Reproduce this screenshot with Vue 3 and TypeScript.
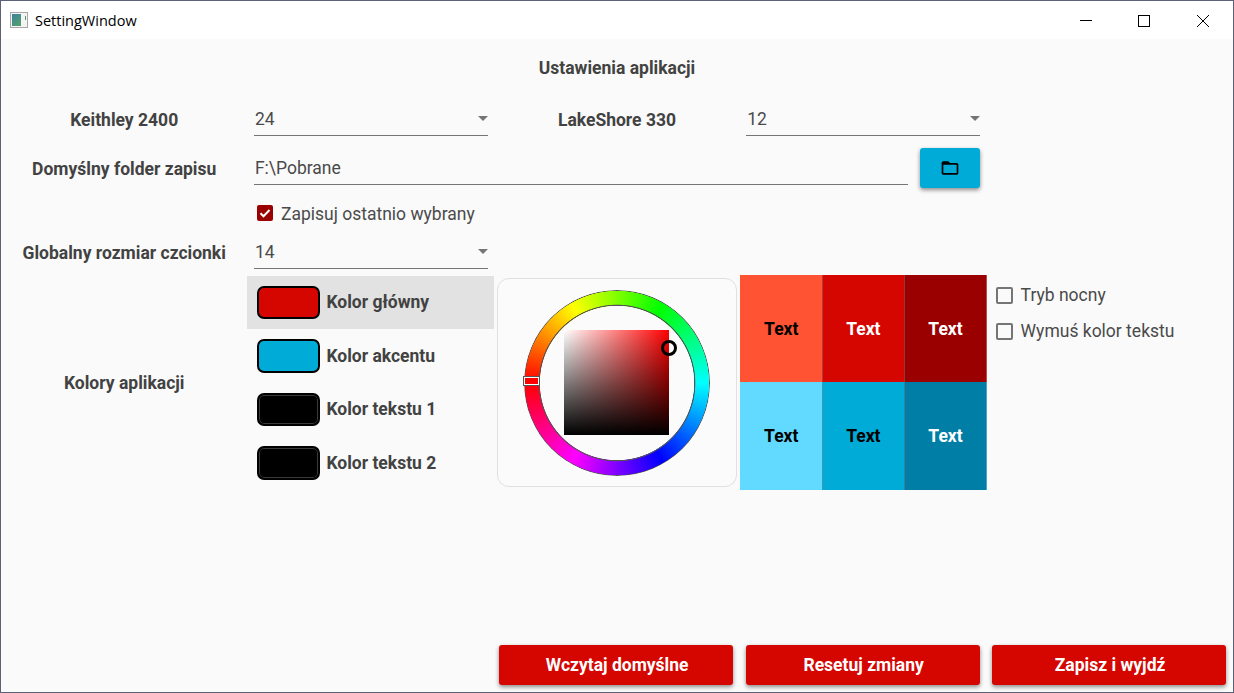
<script setup lang="ts">
const swatches = [
  { name: 'Kolor główny', color: '#d50500', ring: 'transparent', active: true },
  { name: 'Kolor akcentu', color: '#00acd7', ring: 'transparent', active: false },
  { name: 'Kolor tekstu 1', color: '#000', ring: '#3a3a3a', active: false },
  { name: 'Kolor tekstu 2', color: '#000', ring: '#3a3a3a', active: false },
]
const shades = [
  { bg: '#ff5333', fg: '#000' },
  { bg: '#d50500', fg: '#fff' },
  { bg: '#9b0000', fg: '#fff' },
  { bg: '#62daff', fg: '#000' },
  { bg: '#00acd7', fg: '#000' },
  { bg: '#007ea6', fg: '#fff' },
]
const actions = ['Wczytaj domyślne', 'Resetuj zmiany', 'Zapisz i wyjdź']
</script>

<template>
  <div class="window">
    <header class="titlebar">
      <svg class="app-icon" width="18" height="16" viewBox="0 0 18 16">
        <defs>
          <linearGradient id="appfill" x1="0" y1="0" x2="0.6" y2="1">
            <stop offset="0" stop-color="#3f7f9f" />
            <stop offset="1" stop-color="#4f9f72" />
          </linearGradient>
        </defs>
        <rect x="0.5" y="0.5" width="17" height="15" fill="#f4f4f4" stroke="#a8a8a8" />
        <rect x="2" y="2" width="9" height="12" fill="url(#appfill)" />
        <rect x="15" y="4" width="1" height="4" fill="#4f9f72" />
      </svg>
      <span class="window-title">SettingWindow</span>
      <div class="controls">
        <svg class="ctl minimize" width="46" height="38" viewBox="0 0 46 38"><path d="M17 19.5h12" stroke="#000" fill="none" /></svg>
        <svg class="ctl" width="46" height="38" viewBox="0 0 46 38"><rect x="17.5" y="14.5" width="11" height="11" stroke="#000" fill="none" /></svg>
        <svg class="ctl" width="46" height="38" viewBox="0 0 46 38"><path d="M17 14l12 12M29 14l-12 12" stroke="#000" fill="none" /></svg>
      </div>
    </header>

    <main class="content">
      <h1 class="heading">Ustawienia aplikacji</h1>

      <div class="label">Keithley 2400</div>
      <div class="select"><span>24</span><i class="arrow"></i></div>
      <div class="label">LakeShore 330</div>
      <div class="select second"><span>12</span><i class="arrow"></i></div>
      <div></div>

      <div class="label">Domyślny folder zapisu</div>
      <div class="path-row">
        <div class="select path"><span>F:\Pobrane</span></div>
        <button class="folder-btn" type="button">
          <svg width="20" height="20" viewBox="0 0 24 24"><path d="M20 6h-8l-2-2H4c-1.1 0-1.99.9-1.99 2L2 18c0 1.1.9 2 2 2h16c1.1 0 2-.9 2-2V8c0-1.1-.9-2-2-2zm0 12H4V8h16v10z" fill="#000" /></svg>
        </button>
      </div>
      <div></div>

      <div></div>
      <label class="check save-last">
        <span class="box checked">
          <svg width="16" height="16" viewBox="0 0 16 16"><path d="M3.5 8.2l3 3 6-6.2" stroke="#fff" stroke-width="2" fill="none" /></svg>
        </span>
        <span class="save-text">Zapisuj ostatnio wybrany</span>
      </label>

      <div class="label">Globalny rozmiar czcionki</div>
      <div class="select"><span>14</span><i class="arrow"></i></div>
      <div class="fill"></div>

      <div class="label colors-label">Kolory aplikacji</div>
      <ul class="swatch-list">
        <li v-for="s in swatches" :key="s.name" class="swatch-row" :class="{ active: s.active }">
          <span class="swatch" :style="{ background: s.color, boxShadow: 'inset 0 0 0 1px ' + s.ring }"></span>
          <span class="swatch-name">{{ s.name }}</span>
        </li>
      </ul>

      <div class="picker-card">
        <div class="wheel-wrap">
          <div class="wheel"></div>
          <div class="hue-marker"></div>
          <div class="sv">
            <div class="sv-marker"></div>
          </div>
        </div>
      </div>

      <div class="palette">
        <div v-for="(c, i) in shades" :key="i" class="shade" :style="{ background: c.bg, color: c.fg }">Text</div>
      </div>

      <div class="options">
        <label class="check"><span class="box"></span>Tryb nocny</label>
        <label class="check"><span class="box"></span>Wymuś kolor tekstu</label>
      </div>

      <footer class="actions">
        <button v-for="a in actions" :key="a" class="action" type="button">{{ a }}</button>
      </footer>
    </main>
  </div>
</template>

<style>
html, body { margin: 0; padding: 0; overflow: hidden; }
</style>

<style scoped>
.window {
  width: 1234px;
  height: 693px;
  box-sizing: border-box;
  border: 1px solid #5d6178;
  background: #fafafa;
  display: flex;
  flex-direction: column;
  font-family: Roboto, sans-serif;
  color: #424242;
  overflow: hidden;
}
.titlebar {
  height: 38px;
  flex: none;
  background: #fff;
  display: flex;
  align-items: center;
  padding-left: 9px;
}
.window-title {
  margin-left: 7px;
  font-family: "Open Sans", "Noto Sans", sans-serif;
  font-size: 14.5px;
  color: #000;
}
.controls { margin-left: auto; display: flex; margin-right: 7px; gap: 13px; }
.ctl { display: block; }
.minimize { margin-right: -1px; }

.content {
  flex: 1;
  display: grid;
  grid-template-columns: repeat(5, 1fr);
  grid-template-rows: 58px 44px 54px 36px 42px 217px 1fr 47px;
}
.heading {
  grid-column: 1 / -1;
  margin: 0;
  align-self: center;
  text-align: center;
  font-size: 17.5px;
  font-weight: 700;
}
.label {
  align-self: center;
  text-align: center;
  font-size: 17.5px;
  font-weight: 700;
  white-space: nowrap;
  padding-top: 2px;
}
.select {
  align-self: center;
  margin: 0 6px 0 6.5px;
  height: 34px;
  box-sizing: border-box;
  border-bottom: 1px solid #757575;
  padding-left: 1px;
  display: flex;
  align-items: center;
  justify-content: space-between;
  font-size: 17.5px;
  color: #4a4a4a;
}
.select.second { margin: 0 6.6px 0 6px; }
.arrow {
  width: 0;
  height: 0;
  border-left: 5px solid transparent;
  border-right: 5px solid transparent;
  border-top: 5px solid #757575;
}
.path-row {
  grid-column: 2 / 5;
  display: flex;
  align-items: center;
  gap: 12px;
  padding: 0 6.5px;
}
.path { flex: 1; margin: 0; }
.folder-btn {
  width: 60px;
  height: 40px;
  border: 0;
  border-radius: 3px;
  background: #00acd7;
  box-shadow: 0 2px 4px rgba(0, 0, 0, 0.45);
  display: flex;
  align-items: center;
  justify-content: center;
  padding: 0;
}
.check {
  display: flex;
  align-items: center;
  font-size: 17.5px;
  color: #4a4a4a;
  white-space: nowrap;
}
.save-last { grid-column: 2 / 6; padding-left: 9.5px; }
.save-text { padding-top: 2px; }
.box {
  width: 17px;
  height: 17px;
  box-sizing: border-box;
  border: 2px solid #757575;
  border-radius: 2px;
  margin-right: 8px;
  flex: none;
}
.box.checked {
  width: 16px;
  height: 16px;
  border: 0;
  background: #9b0000;
}
.box.checked svg { display: block; }
.fill { grid-column: 3 / 6; }

.colors-label { margin-top: 1px; }
.swatch-list {
  list-style: none;
  margin: 2.6px 0 0;
  padding: 0;
  height: 214px;
  display: grid;
  grid-template-rows: repeat(4, 1fr);
}
.swatch-row {
  display: flex;
  align-items: center;
  padding-left: 10px;
}
.swatch-row.active { background: #e2e2e2; }
.swatch {
  width: 63px;
  height: 33.6px;
  box-sizing: border-box;
  border: 2px solid #000;
  border-radius: 7px;
  flex: none;
}
.swatch-name {
  margin-left: 6px;
  font-size: 17.5px;
  font-weight: 700;
}
.picker-card {
  margin: 5px 3px 0;
  height: 209px;
  box-sizing: border-box;
  border: 1px solid #e0e0e0;
  border-radius: 12px;
  background: #fbfbfb;
  display: flex;
  align-items: center;
  justify-content: center;
}
.wheel-wrap {
  position: relative;
  width: 186px;
  height: 186px;
  display: flex;
  align-items: center;
  justify-content: center;
}
.wheel {
  position: absolute;
  inset: 0;
  border-radius: 50%;
  background:
    radial-gradient(circle closest-side, transparent 77px, #555 77.5px, #555 78px, transparent 78.7px, transparent 91.8px, #555 92.4px),
    conic-gradient(from 270deg, #f00, #ff0, #0f0, #0ff, #00f, #f0f, #f00);
  -webkit-mask: radial-gradient(circle closest-side, transparent 76.8px, #000 77.4px);
  mask: radial-gradient(circle closest-side, transparent 76.8px, #000 77.4px);
}
.hue-marker {
  position: absolute;
  left: -1px;
  top: 86px;
  width: 17px;
  height: 10px;
  box-sizing: border-box;
  background: #f00;
  border: 2px solid #fff;
  outline: 1px solid #555;
  outline-offset: -1px;
}
.sv {
  position: relative;
  width: 105px;
  height: 105px;
  background:
    linear-gradient(to top, #000, transparent),
    linear-gradient(to right, #fff, #f00);
}
.sv-marker {
  position: absolute;
  left: 97px;
  top: 10px;
  width: 16px;
  height: 16px;
  box-sizing: border-box;
  border: 3px solid #000;
  border-radius: 50%;
}
.palette {
  margin-top: 2px;
  height: 215px;
  display: grid;
  grid-template-columns: repeat(3, 1fr);
  grid-template-rows: 107px 108px;
}
.shade {
  display: flex;
  align-items: center;
  justify-content: center;
  font-size: 17.5px;
  font-weight: 700;
}
.shade:nth-child(3n + 2),
.shade:nth-child(3n) {
  box-shadow: inset 1px 0 0 rgba(128, 128, 128, 0.45);
}
.shade:nth-child(3n) {
  box-shadow: inset 1px 0 0 rgba(128, 128, 128, 0.45), inset -1px 0 0 rgba(255, 255, 255, 0.3);
}
.options {
  padding: 11px 0 0 9px;
  display: flex;
  flex-direction: column;
  gap: 14px;
}
.options .check { height: 22px; }
.actions {
  grid-column: 3 / 6;
  grid-row: 8;
  display: grid;
  grid-template-columns: repeat(3, 1fr);
  column-gap: 12.7px;
  padding: 0 7px 0 5.5px;
}
.action {
  height: 40px;
  border: 0;
  border-radius: 3px;
  background: #d50500;
  color: #fff;
  font-family: Roboto, sans-serif;
  font-size: 17.5px;
  font-weight: 700;
  box-shadow: 0 2px 4px rgba(0, 0, 0, 0.45);
  padding: 0 0 0 2px;
}
</style>
